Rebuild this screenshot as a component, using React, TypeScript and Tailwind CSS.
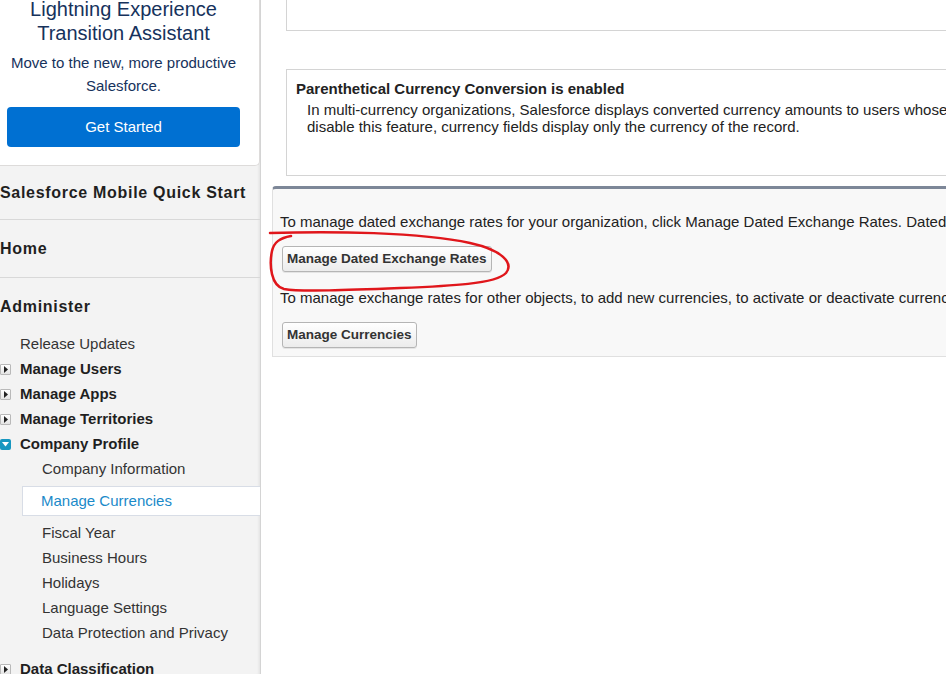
import React from 'react'

type NavItem = {
  label: string
  kind: 'plain' | 'closed' | 'open'
}

const adminItems: NavItem[] = [
  { label: 'Release Updates', kind: 'plain' },
  { label: 'Manage Users', kind: 'closed' },
  { label: 'Manage Apps', kind: 'closed' },
  { label: 'Manage Territories', kind: 'closed' },
  { label: 'Company Profile', kind: 'open' },
]

const profileBefore = ['Company Information']
const profileAfter = ['Fiscal Year', 'Business Hours', 'Holidays', 'Language Settings', 'Data Protection and Privacy']

function ToggleIcon({ open }: { open: boolean }) {
  if (open) {
    return (
      <span className="flex h-[11px] w-[11px] items-center justify-center rounded-[2px] bg-[#1797c0]">
        <svg width="7" height="5" viewBox="0 0 7 5">
          <path d="M0 0 L7 0 L3.5 4.5 Z" fill="#fff" />
        </svg>
      </span>
    )
  }
  return (
    <span className="flex h-[11px] w-[11px] items-center justify-center rounded-[1px] border border-[#b9b9b9] bg-gradient-to-b from-white to-[#e4e4e4]">
      <svg width="4" height="7" viewBox="0 0 4 7">
        <path d="M0 0 L4 3.5 L0 7 Z" fill="#222" />
      </svg>
    </span>
  )
}

function Button({ children }: { children: React.ReactNode }) {
  return (
    <button className="h-[26px] rounded-[3px] border border-[#b5b5b5] bg-gradient-to-b from-white to-[#ececec] px-[4px] text-[13.5px] font-bold text-[#333] shadow-[0_1px_0_rgba(0,0,0,0.08)]">
      {children}
    </button>
  )
}

function Sidebar() {
  return (
    <div className="flex w-[261px] shrink-0 flex-col border-r border-[#d4d4d4] bg-[#f3f3f3] text-[#1f1f1f] shadow-[inset_-3px_0_3px_-2px_rgba(0,0,0,0.08)]">
      {/* Lightning card */}
      <div className="h-[166px] shrink-0 rounded-br-[5px] border-b border-r border-[#dddbda] bg-white">
        <div className="w-[247px] px-[7px] text-center text-[#16325c]">
          <div className="mt-[-3px] text-[20px] leading-[24px]">Lightning Experience</div>
          <div className="text-[20px] leading-[24px]">Transition Assistant</div>
          <div className="mt-[6px] text-[15px] leading-[23px]">Move to the new, more productive</div>
          <div className="text-[15px] leading-[23px]">Salesforce.</div>
          <button className="mt-[10px] h-[40px] w-full rounded-[4px] bg-[#0070d2] text-[15px] text-white">
            Get Started
          </button>
        </div>
      </div>

      <div className="flex h-[54px] shrink-0 items-center border-b border-[#d8d8d8] text-[16px] font-bold tracking-[0.7px]">
        Salesforce Mobile Quick Start
      </div>
      <div className="flex h-[58px] shrink-0 items-center border-b border-[#d8d8d8] text-[16px] font-bold tracking-[0.7px]">
        Home
      </div>

      <div className="shrink-0 pt-[17px]">
        <div className="text-[16px] font-bold leading-[24px] tracking-[0.7px]">Administer</div>
        <div className="mt-[13px]">
          {adminItems.map((item) => (
            <div key={item.label} className="flex h-[25px] items-center">
              <span className="flex w-[20px] shrink-0">
                {item.kind !== 'plain' && <ToggleIcon open={item.kind === 'open'} />}
              </span>
              <span className={item.kind === 'plain' ? 'text-[15px] text-[#333]' : 'text-[15px] font-bold'}>
                {item.label}
              </span>
            </div>
          ))}
          {profileBefore.map((label) => (
            <div key={label} className="flex h-[25px] items-center pl-[42px] text-[15px] text-[#333]">
              {label}
            </div>
          ))}
          <div className="ml-[22px] mt-[4px] flex h-[30px] items-center border-y border-l border-[#d8dde6] bg-white pl-[18px] text-[15px] text-[#1b8ac9]">
            Manage Currencies
          </div>
          <div className="mt-[5px]">
            {profileAfter.map((label) => (
              <div key={label} className="flex h-[25px] items-center pl-[42px] text-[15px] text-[#333]">
                {label}
              </div>
            ))}
          </div>
          <div className="mt-[11px] flex h-[25px] items-center">
            <span className="flex w-[20px] shrink-0">
              <ToggleIcon open={false} />
            </span>
            <span className="text-[15px] font-bold">Data Classification</span>
          </div>
        </div>
      </div>
    </div>
  )
}

function Content() {
  return (
    <div className="relative flex-1 overflow-hidden text-[15px] text-[#222]">
      <div className="w-[900px]">
        {/* top box, continued from above */}
        <div className="ml-[25px] h-[31px] border-x border-b border-[#d4d4d4]" />

        {/* currency conversion notice */}
        <div className="ml-[25px] mt-[38px] h-[107px] border border-[#d4d4d4] pl-[9px] pt-[10px]">
          <div className="font-bold leading-[17px]">Parenthetical Currency Conversion is enabled</div>
          <div className="mt-[4px] pl-[11px] leading-[17px]">
            <div className="whitespace-nowrap">
              In multi-currency organizations, Salesforce displays converted currency amounts to users whose personal currency differs from the record. If you
            </div>
            <div className="whitespace-nowrap">disable this feature, currency fields display only the currency of the record.</div>
          </div>
        </div>

        {/* exchange rate panel */}
        <div className="ml-[11px] mt-[10px] rounded-tl-[4px] border-x border-b border-t-[3px] border-[#e0e0e0] border-t-[#7d8798] bg-[#f8f8f8] pb-[8px] pl-[7px] pt-[24px]">
          <div className="whitespace-nowrap leading-[17px]">
            To manage dated exchange rates for your organization, click Manage Dated Exchange Rates. Dated exchange rates are used for opportunities.
          </div>
          <div className="ml-[2px] mt-[16px]">
            <Button>Manage Dated Exchange Rates</Button>
          </div>
          <div className="mt-[17px] whitespace-nowrap leading-[17px]">
            To manage exchange rates for other objects, to add new currencies, to activate or deactivate currencies, click Manage Currencies.
          </div>
          <div className="ml-[2px] mt-[16px]">
            <Button>Manage Currencies</Button>
          </div>
        </div>
      </div>
    </div>
  )
}

export default function App() {
  return (
    <div className="relative flex h-[674px] w-[946px] overflow-hidden bg-white font-['Liberation_Sans',Arial,sans-serif]">
      <Sidebar />
      <Content />
      {/* hand-drawn red annotation */}
      <svg className="pointer-events-none absolute left-0 top-0" width="946" height="674" viewBox="0 0 946 674">
        <path
          d="M270 233 C 330 231, 420 232, 470 243 C 502 250, 514 263, 506 273 C 496 284, 450 286, 400 288 C 350 290, 300 292, 284 289 C 271 286, 269 265, 272 251 C 274 242, 280 238, 291 236"
          fill="none"
          stroke="#e0161b"
          strokeWidth="2.5"
          strokeLinecap="round"
        />
      </svg>
    </div>
  )
}
